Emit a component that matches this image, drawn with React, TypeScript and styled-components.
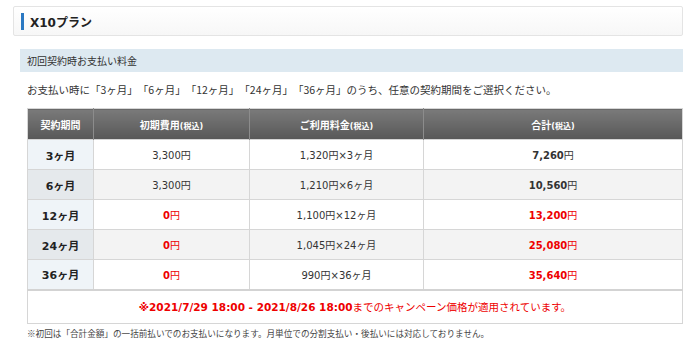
import React, {FC} from "react";
import styled, {createGlobalStyle} from "styled-components";

const GlobalStyle = createGlobalStyle`
  html, body {
    margin: 0;
    padding: 0;
    background: #fff;
  }
  body {
    font-family: "DejaVu Sans", "Noto Sans CJK JP", sans-serif;
    color: #333;
    text-spacing-trim: space-all;
  }
`;

const Page = styled.div`
  width: 700px;
  height: 349px;
  padding: 6px 17px 0 13px;
  box-sizing: border-box;
  overflow: hidden;
`;

const TitleBox = styled.div`
  height: 30px;
  border: 1px solid #e4e4e4;
  border-radius: 2px;
  background: linear-gradient(#ffffff, #f7f7f7);
  box-sizing: border-box;
  display: flex;
  align-items: center;
  padding-left: 7px;
  column-gap: 6px;
`;

const TitleMark = styled.span`
  width: 3px;
  height: 17px;
  background: #2a78c2;
`;

const TitleText = styled.h1`
  margin: 0;
  font-size: 12px;
  font-weight: bold;
  color: #222;
`;

const Section = styled.div`
  margin: 13px 0 0 7px;
`;

const SectionHead = styled.div`
  height: 23px;
  background: #dde9f1;
  display: flex;
  align-items: center;
  padding-left: 7px;
  font-size: 10px;
  color: #333;
`;

const Content = styled.div`
  padding-left: 7px;
`;

const Lead = styled.p`
  margin: 10px 0 0;
  font-family: "Noto Sans CJK JP", sans-serif;
  font-size: 10.5px;
  line-height: 16px;
  color: #333;
`;

const Table = styled.table`
  margin-top: 10px;
  width: 100%;
  border-collapse: collapse;
  border: 1px solid #d6d6d6;
  font-size: 10px;
  color: #333;
`;

const Th = styled.th<{$w?: number}>`
  height: 30px;
  padding: 0;
  width: ${(p) => (p.$w ? `${p.$w}px` : "auto")};
  background: linear-gradient(#7a7a7a, #585858);
  color: #fff;
  font-weight: bold;
  font-size: 10px;
  border-left: 1px solid #8c8c8c;
  &:first-child {
    border-left: none;
  }
`;

const Small = styled.span`
  font-size: 8px;
`;

const Row = styled.tr<{$even?: boolean}>`
  height: 30px;
  background: ${(p) => (p.$even ? "#f3f3f3" : "#fff")};
  & > td:first-child {
    background: ${(p) => (p.$even ? "#e5e9ec" : "#eff4f8")};
    font-weight: bold;
    font-size: 11px;
    color: #222;
  }
`;

const Td = styled.td<{$red?: boolean}>`
  padding: 0;
  text-align: center;
  border: 1px solid #d6d6d6;
  color: ${(p) => (p.$red ? "#ee0000" : "#333")};
`;

const Num = styled.b`
  font-weight: bold;
`;

const NoteCell = styled.td`
  height: 32px;
  padding: 0;
  text-align: center;
  border-top: 2px solid #d3d3d3;
  color: #ee0000;
  font-size: 10.5px;
`;

const FootNote = styled.p`
  margin: 3px 0 0;
  font-family: "Noto Sans CJK JP", sans-serif;
  font-size: 8.6px;
  color: #444;
`;

type Plan = {
    term: string;
    initial: string;
    monthly: string;
    total: string;
    campaign: boolean;
};

const plans: Plan[] = [
    {term: "3", initial: "3,300", monthly: "1,320", total: "7,260", campaign: false},
    {term: "6", initial: "3,300", monthly: "1,210", total: "10,560", campaign: false},
    {term: "12", initial: "0", monthly: "1,100", total: "13,200", campaign: true},
    {term: "24", initial: "0", monthly: "1,045", total: "25,080", campaign: true},
    {term: "36", initial: "0", monthly: "990", total: "35,640", campaign: true},
];

const App: FC = () => {
    return (
        <Page>
            <GlobalStyle/>
            <TitleBox>
                <TitleMark/>
                <TitleText>X10プラン</TitleText>
            </TitleBox>
            <Section>
                <SectionHead>初回契約時お支払い料金</SectionHead>
                <Content>
                    <Lead>
                        お支払い時に「3ヶ月」「6ヶ月」「12ヶ月」「24ヶ月」「36ヶ月」のうち、任意の契約期間をご選択ください。
                    </Lead>
                    <Table>
                        <thead>
                        <tr>
                            <Th $w={65}>契約期間</Th>
                            <Th $w={155}>初期費用<Small>(税込)</Small></Th>
                            <Th $w={173}>ご利用料金<Small>(税込)</Small></Th>
                            <Th>合計<Small>(税込)</Small></Th>
                        </tr>
                        </thead>
                        <tbody>
                        {plans.map((p, i) => (
                            <Row key={p.term} $even={i % 2 === 1}>
                                <Td>{p.term}ヶ月</Td>
                                <Td $red={p.campaign}>
                                    {p.campaign ? <><Num>{p.initial}</Num>円</> : `${p.initial}円`}
                                </Td>
                                <Td>{p.monthly}円×{p.term}ヶ月</Td>
                                <Td $red={p.campaign}><Num>{p.total}</Num>円</Td>
                            </Row>
                        ))}
                        <tr>
                            <NoteCell colSpan={4}>
                                <Num>※2021/7/29 18:00 - 2021/8/26 18:00</Num>までのキャンペーン価格が適用されています。
                            </NoteCell>
                        </tr>
                        </tbody>
                    </Table>
                    <FootNote>
                        ※初回は「合計金額」の一括前払いでのお支払いになります。月単位での分割支払い・後払いには対応しておりません。
                    </FootNote>
                </Content>
            </Section>
        </Page>
    );
};

export default App;
